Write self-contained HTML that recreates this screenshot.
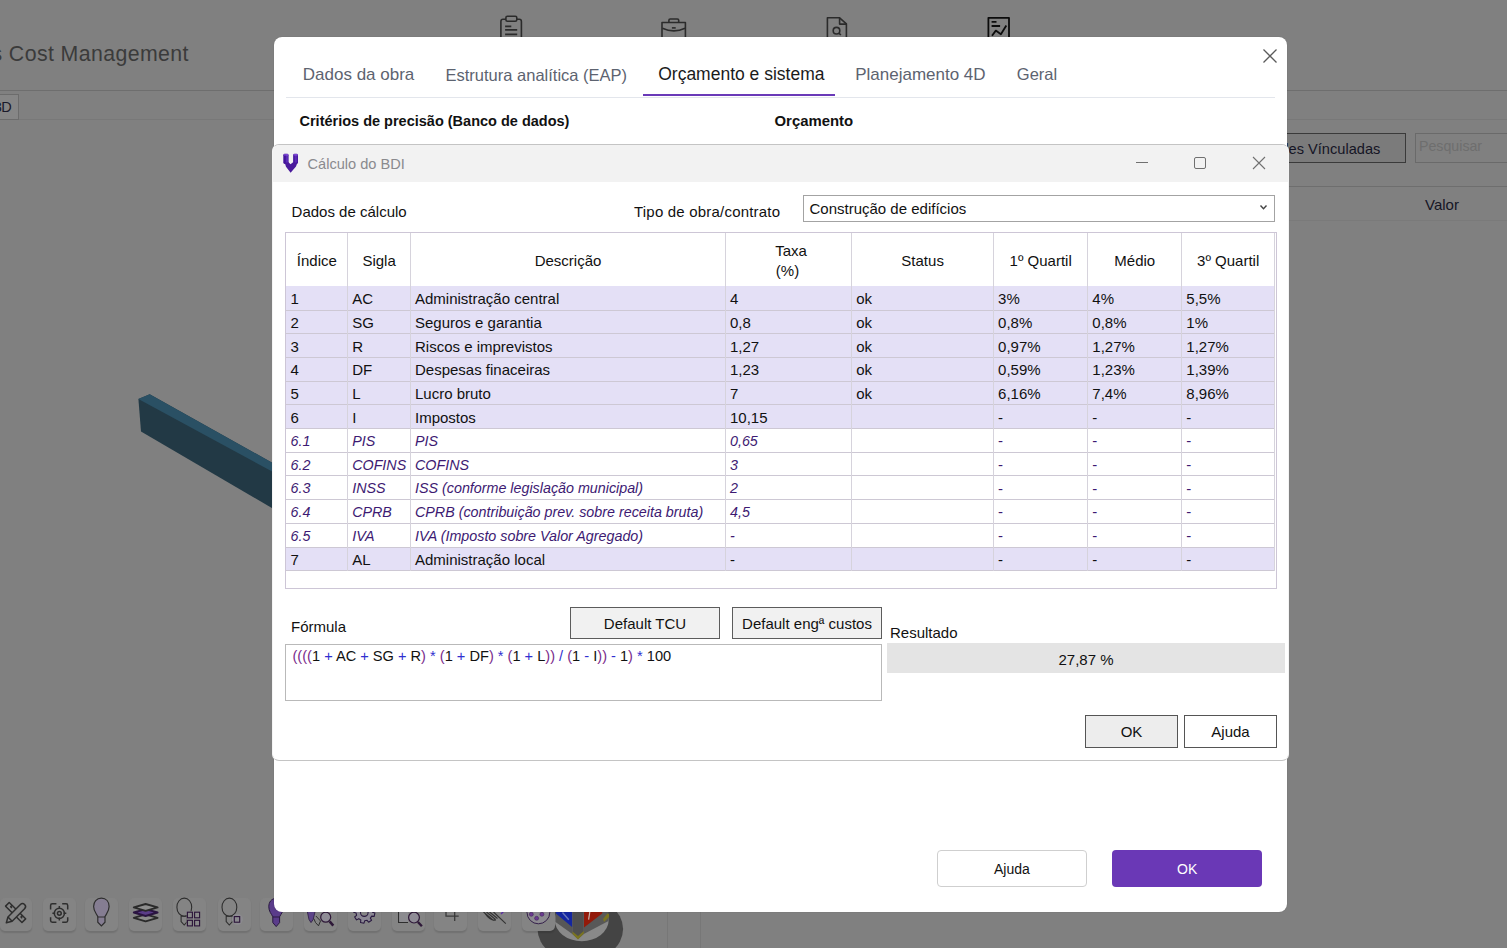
<!DOCTYPE html>
<html><head><meta charset="utf-8">
<style>
*{box-sizing:border-box;margin:0;padding:0}
html,body{width:1507px;height:948px;overflow:hidden}
body{position:relative;background:#808080;font-family:"Liberation Sans",sans-serif;color:#111}
.a{position:absolute}
.t{position:absolute;white-space:nowrap;line-height:1}
svg{position:absolute;overflow:visible}
</style></head>
<body>
<div class="t" style="left:-8.5px;top:43.97px;font-size:21.3px;color:#3b3b3b;letter-spacing:0.4px">s Cost Management</div>
<div class="a" style="left:0;top:90px;width:1507px;height:1px;background:#6e6e6e"></div>
<div class="a" style="left:0;top:119px;width:1507px;height:1px;background:#787878"></div>
<div class="a" style="left:-2px;top:94px;width:21px;height:26px;background:#868686;border:1px solid #6c6c6c"></div>
<div class="t" style="left:-6.2px;top:99.53px;font-size:14.5px;color:#1a1a2a;letter-spacing:-0.6px">3D</div>
<div class="a" style="left:1280px;top:186px;width:227px;height:1px;background:#6e6e6e"></div>
<div class="a" style="left:1280px;top:220px;width:227px;height:1px;background:#7a7a7a"></div>
<div class="a" style="left:1200px;top:133px;width:206px;height:30px;background:#7b7b7b;border:1px solid #3a3a3a"></div>
<div class="t" style="left:1280.5px;top:141.64px;font-size:14.6px;color:#151525;">des Vínculadas</div>
<div class="a" style="left:1415px;top:133px;width:100px;height:30px;border:1px solid #6a6a6a"></div>
<div class="t" style="left:1419.0px;top:138.98px;font-size:14.2px;color:#6e6e6e;">Pesquisar</div>
<div class="t" style="left:1425.0px;top:197.30px;font-size:15px;color:#151525;">Valor</div>
<svg style="left:0;top:0" width="1507" height="948"><polygon points="138.4,398.9 149.7,394.3 274,463.7 274,509.2 141,431.4" fill="#223945"/><polygon points="138.4,398.9 149.7,394.3 274,463.7 274,472.6" fill="#2a5064"/></svg>
<svg style="left:0;top:0" width="1507" height="40"><g fill="none" stroke="#2b2b2b" stroke-width="1.6" stroke-linejoin="round"><path d="M500.9,40 V21.5 Q500.9,19.3 503,19.3 H505.9 M516.8,19.3 H519.3 Q521.4,19.3 521.4,21.5 V40"/><rect x="505.9" y="16.2" width="10.9" height="5" rx="1.5"/><path d="M505.1,26.4 H511.3 M505.1,29.9 H517.2 M505.1,34.4 H517.2"/><path d="M662,40 V22.5 H685.4 V40"/><path d="M668.9,22.5 V20.2 Q668.9,19 670.2,19 H677.4 Q678.7,19 678.7,20.2 V22.5"/><path d="M662.4,28.2 Q674,33.5 685,28.2"/><path d="M671.9,27.9 H675.7" stroke-width="1.6"/><path d="M827.4,40 V17.8 H839.6 L846.4,23.9 V40"/><path d="M839.6,17.8 V24.1 H846.4"/><circle cx="836.5" cy="30.7" r="3.3"/><path d="M838.9,33.1 L840.9,35"/></g><g fill="none" stroke="#0c0c0c" stroke-width="1.8" stroke-linejoin="round"><path d="M988.4,40 V17.8 H1009 V40"/><path d="M991.6,21.9 H996.5 M991.6,26 H1000.1"/><path d="M992,35.8 L995.8,30.6 L1000.9,34.2 L1006.3,25.5"/></g></svg>
<svg style="left:500px;top:890px" width="160" height="58"><g transform="translate(-500,-890)"><ellipse cx="580.3" cy="929" rx="42.8" ry="33" fill="#444"/><ellipse cx="581.7" cy="920" rx="27" ry="21.2" fill="#898989"/><polygon points="555.5,905 572.3,905 572.3,934 555.5,922" fill="#575757"/><polygon points="583.8,905 608.5,905 608.5,921 583.8,934" fill="#585858"/><polygon points="572.3,905 583.8,905 583.8,934 578,939 572.3,934" fill="#4f4f4f"/><polygon points="555.9,905 572.1,905 572.1,926.9 555.9,913.6" fill="#1426a0"/><polygon points="584,905 602.2,905 602.2,913.6 584,927.6" fill="#931a0a"/><path d="M562.5,912.5 L568.8,919.8" stroke="#6a78b8" stroke-width="1.4"/><path d="M589.8,912 L588.6,919.6" stroke="#c8b8b0" stroke-width="1.2"/><polygon points="572.5,931.5 578,936 583.8,931 583.8,933.5 578,939.5 572.5,934" fill="#7a7420"/><polygon points="603,919 607.5,913.6 609,914 609,917 604,922" fill="#7a7420"/></g></svg>
<div class="a" style="left:0.0px;top:897.5px;width:32.0px;height:33.5px;background:#848484;border-radius:5px;box-shadow:0 1.5px 1.5px rgba(0,0,0,.12)"></div>
<div class="a" style="left:42.7px;top:897.5px;width:33.3px;height:33.5px;background:#848484;border-radius:5px;box-shadow:0 1.5px 1.5px rgba(0,0,0,.12)"></div>
<div class="a" style="left:85.0px;top:897.5px;width:33.0px;height:33.5px;background:#848484;border-radius:5px;box-shadow:0 1.5px 1.5px rgba(0,0,0,.12)"></div>
<div class="a" style="left:129.0px;top:897.5px;width:33.0px;height:33.5px;background:#848484;border-radius:5px;box-shadow:0 1.5px 1.5px rgba(0,0,0,.12)"></div>
<div class="a" style="left:173.0px;top:897.5px;width:33.0px;height:33.5px;background:#848484;border-radius:5px;box-shadow:0 1.5px 1.5px rgba(0,0,0,.12)"></div>
<div class="a" style="left:218.0px;top:897.5px;width:33.0px;height:33.5px;background:#848484;border-radius:5px;box-shadow:0 1.5px 1.5px rgba(0,0,0,.12)"></div>
<div class="a" style="left:260.0px;top:897.5px;width:33.0px;height:33.5px;background:#848484;border-radius:5px;box-shadow:0 1.5px 1.5px rgba(0,0,0,.12)"></div>
<div class="a" style="left:304.0px;top:897.5px;width:33.0px;height:33.5px;background:#848484;border-radius:5px;box-shadow:0 1.5px 1.5px rgba(0,0,0,.12)"></div>
<div class="a" style="left:348.0px;top:897.5px;width:32.5px;height:33.5px;background:#848484;border-radius:5px;box-shadow:0 1.5px 1.5px rgba(0,0,0,.12)"></div>
<div class="a" style="left:391.5px;top:897.5px;width:33.0px;height:33.5px;background:#848484;border-radius:5px;box-shadow:0 1.5px 1.5px rgba(0,0,0,.12)"></div>
<div class="a" style="left:434.0px;top:897.5px;width:33.0px;height:33.5px;background:#848484;border-radius:5px;box-shadow:0 1.5px 1.5px rgba(0,0,0,.12)"></div>
<div class="a" style="left:478.0px;top:897.5px;width:33.0px;height:33.5px;background:#848484;border-radius:5px;box-shadow:0 1.5px 1.5px rgba(0,0,0,.12)"></div>
<div class="a" style="left:521.5px;top:897.5px;width:33.5px;height:33.5px;background:#848484;border-radius:5px;box-shadow:0 1.5px 1.5px rgba(0,0,0,.12)"></div>
<svg style="left:0;top:880px" width="700" height="68"><g transform="translate(0,-880)"><g fill="#848484" stroke="#2e2e2e" stroke-width="1.5" stroke-linejoin="round"><g transform="translate(15.6,912.5) rotate(45)"><rect x="-11.6" y="-2.6" width="23.2" height="5.2"/><path d="M-7.6,-2.6 V-0.6 H-5.8 M7,-2.6 V-0.6 H8.8" fill="none"/></g><g transform="translate(15.6,912.5) rotate(-45)"><path d="M-13.8,0.7 L-8.6,-2.2 H9 A2.95,2.95 0 0 1 9,3.7 H-8.6 Z"/><path d="M-8.6,-2.2 V3.7" fill="none"/></g></g><g fill="none" stroke="#2e2e2e" stroke-width="1.5"><path d="M50.6,909.6 V905.4 Q50.6,903.7 52.3,903.7 H56.4 M62.2,903.7 H66.1 Q67.7,903.7 67.7,905.4 V909.6 M67.7,917.2 V920.6 Q67.7,922.3 66.1,922.3 H62.2 M56.4,922.3 H52.3 Q50.6,922.3 50.6,920.6 V917.2"/><circle cx="59.35" cy="913.3" r="5.1"/><circle cx="59.35" cy="913.3" r="1.9"/><path d="M59.35,906 V909 M59.35,917.6 V920.6 M52.4,913.3 H55.2 M63.5,913.3 H66.3"/></g><path d="M101.4,898.2 C106.3,898.2 109.1,901.8 109.1,906.6 C109.1,911.2 106.4,913.6 105,916.6 V922.2 L101.4,926 L97.8,922.2 V916.6 C96.4,913.6 93.6,911.2 93.6,906.6 C93.6,901.8 96.5,898.2 101.4,898.2 Z" fill="#857d92" stroke="#2e2e2e" stroke-width="1.2"/><path d="M97.8,917 H105" stroke="#2e2e2e" stroke-width="1"/><g stroke="#2a2a2a" stroke-width="1.9" stroke-linejoin="round"><path d="M133.8,917.8 L145.6,914.4 L157.6,917.8 L145.6,921.3 Z" fill="#8c8c8c"/><path d="M133.8,912.5 L145.6,909.1 L157.6,912.5 L145.6,916 Z" fill="#5a3c88" stroke="#2a1440"/><path d="M133.8,907.4 L145.6,904 L157.6,907.4 L145.6,910.9 Z" fill="#8e8e8e"/></g><g fill="none" stroke="#2e2e2e" stroke-width="1.1"><ellipse cx="184.3" cy="907.2" rx="7.4" ry="9.1"/><path d="M181.1,916.2 V921.6 L184.2,925 L187.3,921.6 V916.2 Z"/></g><rect x="186.6" y="911.2" width="13.8" height="15.8" fill="#868686"/><g fill="#8a8a8a" stroke="#2a1238" stroke-width="1.1"><rect x="187.4" y="912.2" width="5" height="5.6"/><rect x="194.6" y="912.2" width="5" height="5.6"/><rect x="187.4" y="920.3" width="5" height="5.6"/><rect x="194.6" y="920.3" width="5" height="5.6"/></g><g fill="none" stroke="#2e2e2e" stroke-width="1.1"><ellipse cx="229.4" cy="907.2" rx="7.4" ry="9.1"/><path d="M226.2,916.2 V921.6 L229.3,925 L232.4,921.6 V916.2 Z"/></g><circle cx="237.3" cy="919.3" r="5.6" fill="#8b8a8f"/><rect x="234.3" y="916.6" width="5.4" height="5.6" fill="none" stroke="#2a1238" stroke-width="1.1"/><path d="M276.2,898.4 C281,898.4 283.7,902 283.7,906.8 C283.7,911.4 281,913.8 279.6,916.8 V922.6 L276.2,926.6 L272.8,922.6 V916.8 C271.4,913.8 268.8,911.4 268.8,906.8 C268.8,902 271.4,898.4 276.2,898.4 Z" fill="#5a3c8a" stroke="#2a1a40" stroke-width="1"/><path d="M272.8,917 H279.6" stroke="#2a1a40" stroke-width="1"/><path d="M307.2,911 L315.2,911 L313.2,919.5 L311,922.6 L309,919.5 Z" fill="#5c4488" stroke="#2a1a40" stroke-width="0.8"/><path d="M315.9,916 L320.5,921 L318.5,925.8 L315.5,922.5 L313.8,918.6" fill="none" stroke="#2e2e2e" stroke-width="1"/><circle cx="325.7" cy="917.2" r="5" fill="#8f8c96" stroke="#2e1838" stroke-width="1.2"/><path d="M329.6,921.4 L333.3,925.6" stroke="#2e1838" stroke-width="2.6"/><path d="M372.49,912.21 L374.89,912.93 L374.22,916.35 L371.72,916.09 L370.36,918.12 L371.56,920.33 L368.66,922.26 L367.08,920.32 L364.69,920.79 L363.97,923.19 L360.55,922.52 L360.81,920.02 L358.78,918.66 L356.57,919.86 L354.64,916.96 L356.58,915.38 L356.11,912.99 L353.71,912.27 L354.38,908.85 L356.88,909.11 L358.24,907.08 L357.04,904.87 L359.94,902.94 L361.52,904.88 L363.91,904.41 L364.63,902.01 L368.05,902.68 L367.79,905.18 L369.82,906.54 L372.03,905.34 L373.96,908.24 L372.02,909.82 Z" fill="#8b8894" stroke="#2a1a40" stroke-width="1.1" stroke-linejoin="round"/><circle cx="364.3" cy="912.6" r="3.8" fill="#848484" stroke="#2a1a40" stroke-width="1.1"/><path d="M398.6,910 V922.4 H408" fill="none" stroke="#2e2e2e" stroke-width="1.2"/><rect x="399.2" y="910" width="9" height="12" fill="#8c8c90"/><circle cx="414" cy="917.6" r="5.4" fill="#8f8c96" stroke="#2e1838" stroke-width="1.2"/><path d="M417.9,922 L421.9,926.3" stroke="#2e1838" stroke-width="2.4"/><path d="M446,910 V916.1 H458.7 M454.7,911 V921" fill="none" stroke="#3a3a3a" stroke-width="1.3"/><path d="M483.5,912 L493.5,920.5 M486.5,912 L495.5,919.5 M489.5,912 L497.5,918.5 M493.5,912 L505.8,923.7 M485,913.5 Q490,921 496,920" fill="none" stroke="#333" stroke-width="1.1"/><path d="M501,914 L504,911" stroke="#5a2aa8" stroke-width="1.3"/><circle cx="538.4" cy="912.4" r="11.4" fill="#8c8a90" stroke="#35204a" stroke-width="1"/><circle cx="531.3" cy="914.3" r="2" fill="#6a3a90" stroke="#3a2050" stroke-width=".5"/><circle cx="541.9" cy="914.3" r="2" fill="#6a3a90" stroke="#3a2050" stroke-width=".5"/><circle cx="536.6" cy="918.3" r="2" fill="#6a3a90" stroke="#3a2050" stroke-width=".5"/></g></svg>
<div class="a" style="left:667px;top:900px;width:1px;height:48px;background:#777"></div>
<div class="a" style="left:700px;top:900px;width:1px;height:48px;background:#777"></div>
<div class="a" style="left:274px;top:37px;width:1013px;height:875px;background:#fff;border-radius:8px;box-shadow:0 0 1px rgba(0,0,0,.3)"></div>
<div class="t" style="left:302.8px;top:66.21px;font-size:17px;color:#5d6370;">Dados da obra</div>
<div class="t" style="left:445.5px;top:66.63px;font-size:16.5px;color:#5d6370;">Estrutura analítica (EAP)</div>
<div class="t" style="left:658.2px;top:65.79px;font-size:17.5px;color:#1b1b1b;">Orçamento e sistema</div>
<div class="t" style="left:855.2px;top:66.21px;font-size:17px;color:#5d6370;">Planejamento 4D</div>
<div class="t" style="left:1016.8px;top:66.13px;font-size:16.5px;color:#5d6370;">Geral</div>
<div class="a" style="left:286px;top:97px;width:989px;height:1px;background:#e3e6ec"></div>
<div class="a" style="left:643px;top:94px;width:192px;height:2px;background:#6a3ab8"></div>
<svg style="left:1263px;top:48.8px" width="14" height="14"><path d="M0.5 0.5L13.5 13.5M13.5 0.5L0.5 13.5" stroke="#5a5a5a" stroke-width="1.3"/></svg>
<div class="t" style="left:299.5px;top:114.13px;font-size:14.5px;color:#111;font-weight:bold">Critérios de precisão (Banco de dados)</div>
<div class="t" style="left:774.5px;top:113.79px;font-size:14.9px;color:#111;font-weight:bold">Orçamento</div>
<div class="a" style="left:937px;top:850px;width:150px;height:37px;background:#fff;border:1px solid #cfcfcf;border-radius:4px"></div>
<div class="a" style="left:1112px;top:850px;width:150px;height:37px;background:#6a38b6;border-radius:4px"></div>
<div class="t" style="left:994.0px;top:862.15px;font-size:14px;color:#111;">Ajuda</div>
<div class="t" style="left:1177.0px;top:862.15px;font-size:14px;color:#fff;">OK</div>
<div class="a" style="left:272px;top:144px;width:1017px;height:617px;background:#fff;border:1px solid #c4c4c4;border-left-color:#f4f4f4;border-right-color:#f4f4f4;border-radius:7px"></div>
<div class="a" style="left:273px;top:145px;width:1015px;height:37px;background:#f2f2f2;border-radius:6px 6px 0 0"></div>
<svg style="left:278px;top:150px" width="26" height="26"><rect x="5.3" y="3.8" width="5.3" height="10.2" rx="1.4" fill="#42139a"/><rect x="15.1" y="3.8" width="4.9" height="10.2" rx="1.4" fill="#4a1aa0"/><polygon points="6.6,12.2 10.6,12.2 12.5,14.3 15.1,12.2 19.6,12.2 18,16.5 12.6,22.8 8,16.8" fill="#4a1a9c"/><rect x="7.8" y="4.5" width="2.2" height="8" fill="#7040d0" opacity=".55"/><rect x="16.8" y="4.5" width="2" height="8" fill="#7040d0" opacity=".45"/><rect x="6" y="4" width="4" height="1.6" fill="#9a60f0" opacity=".6"/><rect x="15.6" y="4" width="4" height="1.6" fill="#9a60f0" opacity=".6"/></svg>
<div class="t" style="left:307.5px;top:156.64px;font-size:14.6px;color:#8a8a8e;">Cálculo do BDI</div>
<div class="a" style="left:1136px;top:162px;width:12px;height:1px;background:#707070"></div>
<div class="a" style="left:1194px;top:157px;width:12px;height:12px;border:1px solid #707070;border-radius:2px"></div>
<svg style="left:1253px;top:157px" width="12" height="12"><path d="M0 0L12 12M12 0L0 12" stroke="#707070" stroke-width="1.1"/></svg>
<div class="t" style="left:291.6px;top:204.10px;font-size:15px;color:#111;">Dados de cálculo</div>
<div class="t" style="left:634.0px;top:203.90px;font-size:15px;color:#111;letter-spacing:0.2px">Tipo de obra/contrato</div>
<div class="a" style="left:803px;top:195px;width:472px;height:27px;border:1px solid #a3a3a3;background:#fff"></div>
<div class="t" style="left:809.5px;top:201.00px;font-size:15px;color:#111;">Construção de edifícios</div>
<svg style="left:1260px;top:205px" width="8" height="5"><path d="M0.5 0.5L3.5 3.8L6.5 0.5" stroke="#444" stroke-width="1.4" fill="none"/></svg>
<div class="a" style="left:285px;top:232px;width:992px;height:357px;border:1px solid #cdc6d6;background:#fff"></div>
<div class="a" style="left:286px;top:286.30px;width:989px;height:23.70px;background:#e4e0f6"></div>
<div class="a" style="left:286px;top:310.00px;width:989px;height:23.70px;background:#e4e0f6"></div>
<div class="a" style="left:286px;top:333.70px;width:989px;height:23.70px;background:#e4e0f6"></div>
<div class="a" style="left:286px;top:357.40px;width:989px;height:23.70px;background:#e4e0f6"></div>
<div class="a" style="left:286px;top:381.10px;width:989px;height:23.70px;background:#e4e0f6"></div>
<div class="a" style="left:286px;top:404.80px;width:989px;height:23.70px;background:#e4e0f6"></div>
<div class="a" style="left:286px;top:547.00px;width:989px;height:23.70px;background:#e4e0f6"></div>
<div class="a" style="left:286px;top:309.50px;width:989px;height:1px;background:#cdc8d4"></div>
<div class="a" style="left:286px;top:333.20px;width:989px;height:1px;background:#cdc8d4"></div>
<div class="a" style="left:286px;top:356.90px;width:989px;height:1px;background:#cdc8d4"></div>
<div class="a" style="left:286px;top:380.60px;width:989px;height:1px;background:#cdc8d4"></div>
<div class="a" style="left:286px;top:404.30px;width:989px;height:1px;background:#cdc8d4"></div>
<div class="a" style="left:286px;top:428.00px;width:989px;height:1px;background:#cdc8d4"></div>
<div class="a" style="left:286px;top:451.70px;width:989px;height:1px;background:#cdc8d4"></div>
<div class="a" style="left:286px;top:475.40px;width:989px;height:1px;background:#cdc8d4"></div>
<div class="a" style="left:286px;top:499.10px;width:989px;height:1px;background:#cdc8d4"></div>
<div class="a" style="left:286px;top:522.80px;width:989px;height:1px;background:#cdc8d4"></div>
<div class="a" style="left:286px;top:546.50px;width:989px;height:1px;background:#cdc8d4"></div>
<div class="a" style="left:286px;top:570.20px;width:989px;height:1px;background:#cdc8d4"></div>
<div class="a" style="left:347.2px;top:233px;width:1px;height:337.7px;background:#d6d3dc"></div>
<div class="a" style="left:410.0px;top:233px;width:1px;height:337.7px;background:#d6d3dc"></div>
<div class="a" style="left:725.0px;top:233px;width:1px;height:337.7px;background:#d6d3dc"></div>
<div class="a" style="left:851.2px;top:233px;width:1px;height:337.7px;background:#d6d3dc"></div>
<div class="a" style="left:993.1px;top:233px;width:1px;height:337.7px;background:#d6d3dc"></div>
<div class="a" style="left:1087.3px;top:233px;width:1px;height:337.7px;background:#d6d3dc"></div>
<div class="a" style="left:1181.3px;top:233px;width:1px;height:337.7px;background:#d6d3dc"></div>
<div class="a" style="left:1274.0px;top:233px;width:1px;height:337.7px;background:#d6d3dc"></div>
<div class="t" style="left:286.0px;width:61.7px;text-align:center;top:253.10px;font-size:15px;color:#111">Índice</div>
<div class="t" style="left:347.7px;width:62.8px;text-align:center;top:253.10px;font-size:15px;color:#111">Sigla</div>
<div class="t" style="left:410.5px;width:315.0px;text-align:center;top:253.10px;font-size:15px;color:#111">Descrição</div>
<div class="t" style="left:775.2px;top:243.20px;font-size:15px;color:#111;">Taxa</div>
<div class="t" style="left:775.8px;top:262.80px;font-size:15px;color:#111;">(%)</div>
<div class="t" style="left:851.7px;width:141.9px;text-align:center;top:253.10px;font-size:15px;color:#111">Status</div>
<div class="t" style="left:993.6px;width:94.2px;text-align:center;top:253.10px;font-size:15px;color:#111">1º Quartil</div>
<div class="t" style="left:1087.8px;width:94.0px;text-align:center;top:253.10px;font-size:15px;color:#111">Médio</div>
<div class="t" style="left:1181.8px;width:92.7px;text-align:center;top:253.10px;font-size:15px;color:#111">3º Quartil</div>
<div class="t" style="left:290.5px;top:291.10px;font-size:15px;color:#111;">1</div>
<div class="t" style="left:352.2px;top:291.10px;font-size:15px;color:#111;">AC</div>
<div class="t" style="left:415.0px;top:291.10px;font-size:15px;color:#111;">Administração central</div>
<div class="t" style="left:730.0px;top:291.10px;font-size:15px;color:#111;">4</div>
<div class="t" style="left:856.2px;top:291.10px;font-size:15px;color:#111;">ok</div>
<div class="t" style="left:998.1px;top:291.10px;font-size:15px;color:#111;">3%</div>
<div class="t" style="left:1092.3px;top:291.10px;font-size:15px;color:#111;">4%</div>
<div class="t" style="left:1186.3px;top:291.10px;font-size:15px;color:#111;">5,5%</div>
<div class="t" style="left:290.5px;top:314.80px;font-size:15px;color:#111;">2</div>
<div class="t" style="left:352.2px;top:314.80px;font-size:15px;color:#111;">SG</div>
<div class="t" style="left:415.0px;top:314.80px;font-size:15px;color:#111;">Seguros e garantia</div>
<div class="t" style="left:730.0px;top:314.80px;font-size:15px;color:#111;">0,8</div>
<div class="t" style="left:856.2px;top:314.80px;font-size:15px;color:#111;">ok</div>
<div class="t" style="left:998.1px;top:314.80px;font-size:15px;color:#111;">0,8%</div>
<div class="t" style="left:1092.3px;top:314.80px;font-size:15px;color:#111;">0,8%</div>
<div class="t" style="left:1186.3px;top:314.80px;font-size:15px;color:#111;">1%</div>
<div class="t" style="left:290.5px;top:338.50px;font-size:15px;color:#111;">3</div>
<div class="t" style="left:352.2px;top:338.50px;font-size:15px;color:#111;">R</div>
<div class="t" style="left:415.0px;top:338.50px;font-size:15px;color:#111;">Riscos e imprevistos</div>
<div class="t" style="left:730.0px;top:338.50px;font-size:15px;color:#111;">1,27</div>
<div class="t" style="left:856.2px;top:338.50px;font-size:15px;color:#111;">ok</div>
<div class="t" style="left:998.1px;top:338.50px;font-size:15px;color:#111;">0,97%</div>
<div class="t" style="left:1092.3px;top:338.50px;font-size:15px;color:#111;">1,27%</div>
<div class="t" style="left:1186.3px;top:338.50px;font-size:15px;color:#111;">1,27%</div>
<div class="t" style="left:290.5px;top:362.20px;font-size:15px;color:#111;">4</div>
<div class="t" style="left:352.2px;top:362.20px;font-size:15px;color:#111;">DF</div>
<div class="t" style="left:415.0px;top:362.20px;font-size:15px;color:#111;">Despesas finaceiras</div>
<div class="t" style="left:730.0px;top:362.20px;font-size:15px;color:#111;">1,23</div>
<div class="t" style="left:856.2px;top:362.20px;font-size:15px;color:#111;">ok</div>
<div class="t" style="left:998.1px;top:362.20px;font-size:15px;color:#111;">0,59%</div>
<div class="t" style="left:1092.3px;top:362.20px;font-size:15px;color:#111;">1,23%</div>
<div class="t" style="left:1186.3px;top:362.20px;font-size:15px;color:#111;">1,39%</div>
<div class="t" style="left:290.5px;top:385.90px;font-size:15px;color:#111;">5</div>
<div class="t" style="left:352.2px;top:385.90px;font-size:15px;color:#111;">L</div>
<div class="t" style="left:415.0px;top:385.90px;font-size:15px;color:#111;">Lucro bruto</div>
<div class="t" style="left:730.0px;top:385.90px;font-size:15px;color:#111;">7</div>
<div class="t" style="left:856.2px;top:385.90px;font-size:15px;color:#111;">ok</div>
<div class="t" style="left:998.1px;top:385.90px;font-size:15px;color:#111;">6,16%</div>
<div class="t" style="left:1092.3px;top:385.90px;font-size:15px;color:#111;">7,4%</div>
<div class="t" style="left:1186.3px;top:385.90px;font-size:15px;color:#111;">8,96%</div>
<div class="t" style="left:290.5px;top:409.60px;font-size:15px;color:#111;">6</div>
<div class="t" style="left:352.2px;top:409.60px;font-size:15px;color:#111;">I</div>
<div class="t" style="left:415.0px;top:409.60px;font-size:15px;color:#111;">Impostos</div>
<div class="t" style="left:730.0px;top:409.60px;font-size:15px;color:#111;">10,15</div>
<div class="t" style="left:998.1px;top:409.60px;font-size:15px;color:#111;">-</div>
<div class="t" style="left:1092.3px;top:409.60px;font-size:15px;color:#111;">-</div>
<div class="t" style="left:1186.3px;top:409.60px;font-size:15px;color:#111;">-</div>
<div class="t" style="left:290.5px;top:433.90px;font-size:14.3px;color:#3d1a72;font-style:italic">6.1</div>
<div class="t" style="left:352.2px;top:433.90px;font-size:14.3px;color:#3d1a72;font-style:italic">PIS</div>
<div class="t" style="left:415.0px;top:433.90px;font-size:14.3px;color:#3d1a72;font-style:italic">PIS</div>
<div class="t" style="left:730.0px;top:433.90px;font-size:14.3px;color:#3d1a72;font-style:italic">0,65</div>
<div class="t" style="left:998.1px;top:433.30px;font-size:15px;color:#3d1a72;">-</div>
<div class="t" style="left:1092.3px;top:433.30px;font-size:15px;color:#3d1a72;">-</div>
<div class="t" style="left:1186.3px;top:433.30px;font-size:15px;color:#3d1a72;">-</div>
<div class="t" style="left:290.5px;top:457.60px;font-size:14.3px;color:#3d1a72;font-style:italic">6.2</div>
<div class="t" style="left:352.2px;top:457.60px;font-size:14.3px;color:#3d1a72;font-style:italic">COFINS</div>
<div class="t" style="left:415.0px;top:457.60px;font-size:14.3px;color:#3d1a72;font-style:italic">COFINS</div>
<div class="t" style="left:730.0px;top:457.60px;font-size:14.3px;color:#3d1a72;font-style:italic">3</div>
<div class="t" style="left:998.1px;top:457.00px;font-size:15px;color:#3d1a72;">-</div>
<div class="t" style="left:1092.3px;top:457.00px;font-size:15px;color:#3d1a72;">-</div>
<div class="t" style="left:1186.3px;top:457.00px;font-size:15px;color:#3d1a72;">-</div>
<div class="t" style="left:290.5px;top:481.30px;font-size:14.3px;color:#3d1a72;font-style:italic">6.3</div>
<div class="t" style="left:352.2px;top:481.30px;font-size:14.3px;color:#3d1a72;font-style:italic">INSS</div>
<div class="t" style="left:415.0px;top:481.30px;font-size:14.3px;color:#3d1a72;font-style:italic">ISS (conforme legislação municipal)</div>
<div class="t" style="left:730.0px;top:481.30px;font-size:14.3px;color:#3d1a72;font-style:italic">2</div>
<div class="t" style="left:998.1px;top:480.70px;font-size:15px;color:#3d1a72;">-</div>
<div class="t" style="left:1092.3px;top:480.70px;font-size:15px;color:#3d1a72;">-</div>
<div class="t" style="left:1186.3px;top:480.70px;font-size:15px;color:#3d1a72;">-</div>
<div class="t" style="left:290.5px;top:505.00px;font-size:14.3px;color:#3d1a72;font-style:italic">6.4</div>
<div class="t" style="left:352.2px;top:505.00px;font-size:14.3px;color:#3d1a72;font-style:italic">CPRB</div>
<div class="t" style="left:415.0px;top:505.00px;font-size:14.3px;color:#3d1a72;font-style:italic">CPRB (contribuição prev. sobre receita bruta)</div>
<div class="t" style="left:730.0px;top:505.00px;font-size:14.3px;color:#3d1a72;font-style:italic">4,5</div>
<div class="t" style="left:998.1px;top:504.40px;font-size:15px;color:#3d1a72;">-</div>
<div class="t" style="left:1092.3px;top:504.40px;font-size:15px;color:#3d1a72;">-</div>
<div class="t" style="left:1186.3px;top:504.40px;font-size:15px;color:#3d1a72;">-</div>
<div class="t" style="left:290.5px;top:528.70px;font-size:14.3px;color:#3d1a72;font-style:italic">6.5</div>
<div class="t" style="left:352.2px;top:528.70px;font-size:14.3px;color:#3d1a72;font-style:italic">IVA</div>
<div class="t" style="left:415.0px;top:528.70px;font-size:14.3px;color:#3d1a72;font-style:italic">IVA (Imposto sobre Valor Agregado)</div>
<div class="t" style="left:730.0px;top:528.70px;font-size:14.3px;color:#3d1a72;font-style:italic">-</div>
<div class="t" style="left:998.1px;top:528.10px;font-size:15px;color:#3d1a72;">-</div>
<div class="t" style="left:1092.3px;top:528.10px;font-size:15px;color:#3d1a72;">-</div>
<div class="t" style="left:1186.3px;top:528.10px;font-size:15px;color:#3d1a72;">-</div>
<div class="t" style="left:290.5px;top:551.80px;font-size:15px;color:#111;">7</div>
<div class="t" style="left:352.2px;top:551.80px;font-size:15px;color:#111;">AL</div>
<div class="t" style="left:415.0px;top:551.80px;font-size:15px;color:#111;">Administração local</div>
<div class="t" style="left:730.0px;top:551.80px;font-size:15px;color:#111;">-</div>
<div class="t" style="left:998.1px;top:551.80px;font-size:15px;color:#111;">-</div>
<div class="t" style="left:1092.3px;top:551.80px;font-size:15px;color:#111;">-</div>
<div class="t" style="left:1186.3px;top:551.80px;font-size:15px;color:#111;">-</div>
<div class="t" style="left:291.0px;top:619.30px;font-size:15px;color:#111;">Fórmula</div>
<div class="a" style="left:570px;top:607px;width:150px;height:32px;background:#f1f1f1;border:1px solid #5c5c5c"></div>
<div class="a" style="left:732px;top:607px;width:150px;height:32px;background:#f1f1f1;border:1px solid #5c5c5c"></div>
<div class="t" style="left:570px;width:150px;text-align:center;top:616.30px;font-size:15px">Default TCU</div>
<div class="t" style="left:732px;width:150px;text-align:center;top:616.30px;font-size:15px">Default engª custos</div>
<div class="a" style="left:285px;top:644px;width:597px;height:57px;background:#fff;border:1px solid #b9b9b9"></div>
<div class="t" style="left:292.5px;top:648.64px;font-size:14.6px;color:#111;"><span style="color:#7a2c8c">((((</span>1 <span style="color:#3030d0">+</span> AC <span style="color:#3030d0">+</span> SG <span style="color:#3030d0">+</span> R<span style="color:#7a2c8c">)</span> <span style="color:#3030d0">*</span> <span style="color:#7a2c8c">(</span>1 <span style="color:#3030d0">+</span> DF<span style="color:#7a2c8c">)</span> <span style="color:#3030d0">*</span> <span style="color:#7a2c8c">(</span>1 <span style="color:#3030d0">+</span> L<span style="color:#7a2c8c">))</span> <span style="color:#3030d0">/</span> <span style="color:#7a2c8c">(</span>1 <span style="color:#3030d0">-</span> I<span style="color:#7a2c8c">))</span> <span style="color:#3030d0">-</span> 1<span style="color:#7a2c8c">)</span> <span style="color:#3030d0">*</span> 100</div>
<div class="t" style="left:890.0px;top:625.30px;font-size:15px;color:#111;">Resultado</div>
<div class="a" style="left:887px;top:643px;width:398px;height:30px;background:#e4e4e4"></div>
<div class="t" style="left:887px;width:398px;text-align:center;top:652.30px;font-size:15px">27,87 %</div>
<div class="a" style="left:1085px;top:715px;width:93px;height:33px;background:#ededed;border:1px solid #555"></div>
<div class="a" style="left:1184px;top:715px;width:93px;height:33px;background:#fff;border:1px solid #555"></div>
<div class="t" style="left:1085px;width:93px;text-align:center;top:724.30px;font-size:15px">OK</div>
<div class="t" style="left:1184px;width:93px;text-align:center;top:724.30px;font-size:15px">Ajuda</div>
</body></html>
